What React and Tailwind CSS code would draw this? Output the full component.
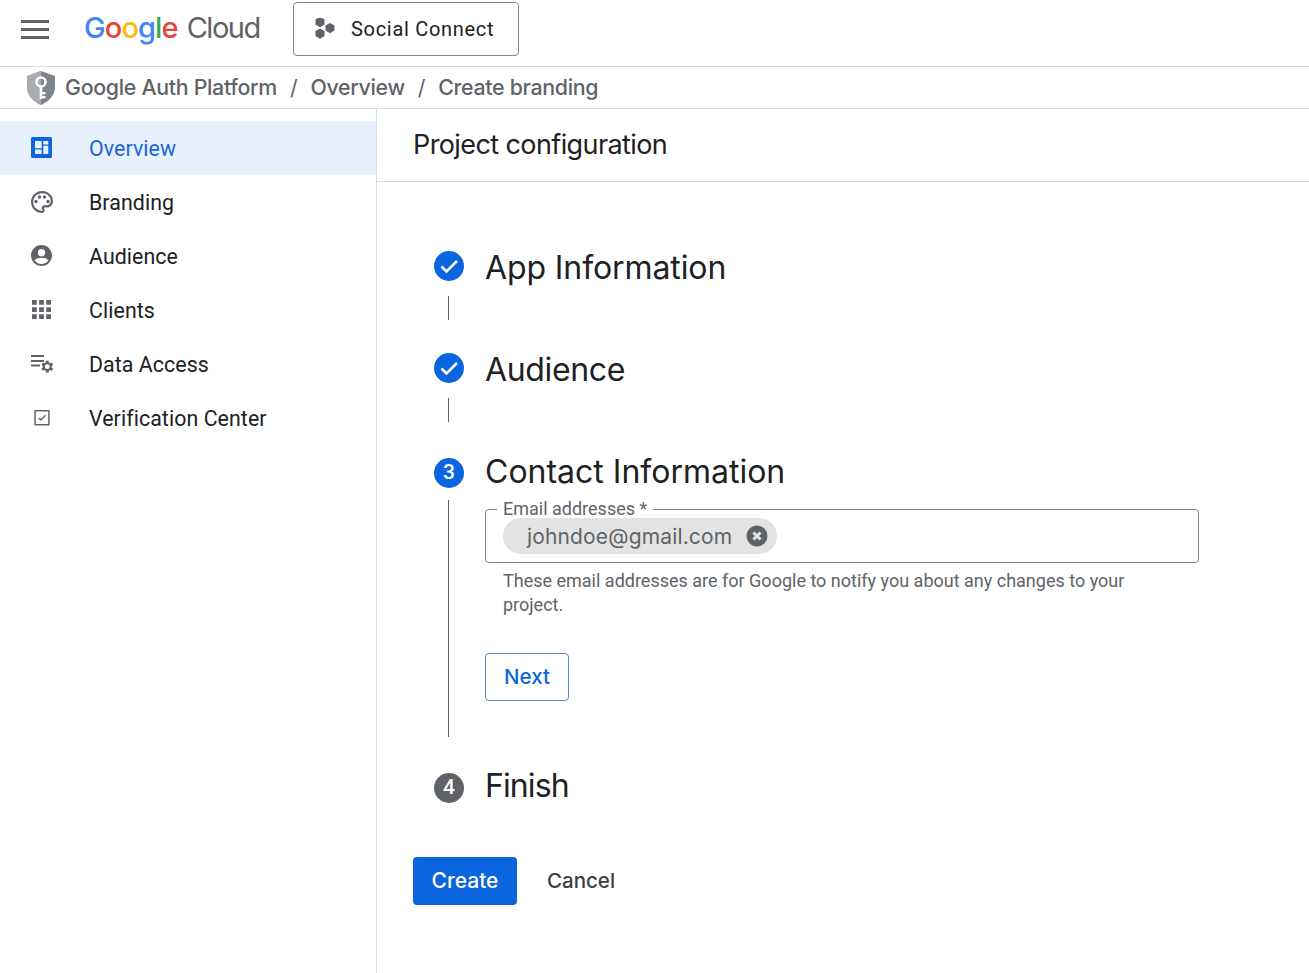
import React from "react";

const roboto = "font-['Roboto',sans-serif]";
const inter = "font-['Inter',sans-serif]";

const navItems = [
  ["Overview", "overview"],
  ["Branding", "palette"],
  ["Audience", "person"],
  ["Clients", "apps"],
  ["Data Access", "data"],
  ["Verification Center", "verify"],
];

function NavIcon({ name, color }) {
  const p = { width: 24, height: 24, viewBox: "0 0 24 24", fill: color };
  if (name === "overview")
    return (
      <svg {...p}>
        <path fillRule="evenodd" d="M2.500 1h18A1.500 1.500 0 0 1 22 2.500v18a1.500 1.500 0 0 1-1.500 1.500h-18A1.500 1.500 0 0 1 1 20.500v-18A1.500 1.500 0 0 1 2.500 1zM5 5v7.300h6.700V5H5zm8.300 0v3.500h5V5h-5zm0 4.700V18h5V9.700h-5zM5 13.500V18h6.700v-4.500H5z" />
      </svg>
    );
  if (name === "palette")
    return (
      <svg {...p}>
        <path d="M12 1C5.950 1 1 5.950 1 12s4.950 11 11 11c1.500 0 2.700-1.200 2.700-2.700 0-.67-.25-1.300-.7-1.800-.09-.11-.14-.23-.14-.36 0-.31.24-.55.55-.55H16.500c3.640 0 6.500-2.960 6.500-6.600C23 5.440 18.060 1 12 1zm4.500 14.300h-2.100c-1.500 0-2.750 1.250-2.750 2.750 0 .67.24 1.310.69 1.820.07.08.16.21.16.38 0 .31-.22.55-.5.55-4.850 0-8.800-3.950-8.800-8.800S7.150 3.200 12 3.200s8.800 3.450 8.800 7.700c0 2.430-1.870 4.400-4.300 4.400z" />
        <circle cx="6" cy="11.500" r="1.700" />
        <circle cx="9.500" cy="7" r="1.700" />
        <circle cx="14.500" cy="7" r="1.700" />
        <circle cx="18" cy="11.500" r="1.700" />
      </svg>
    );
  if (name === "person")
    return (
      <svg {...p}>
        <path transform="translate(-.5 -.5)" d="M12 1.500C6.200 1.500 1.500 6.200 1.500 12S6.200 22.500 12 22.500 22.500 17.800 22.500 12 17.800 1.500 12 1.500zm0 4a3.700 3.700 0 1 1 0 7.400 3.700 3.700 0 0 1 0-7.400zm0 15c-2.900 0-5.500-1.500-7-3.800 1.300-1.700 4.300-2.500 7-2.500s5.700.8 7 2.500a8.400 8.400 0 0 1-7 3.800z" />
      </svg>
    );
  if (name === "apps")
    return (
      <svg {...p}>
        <path transform="translate(2 2) scale(1.0556) translate(-3 -3)" d="M3 3h4.500v4.500H3zM9.750 3h4.500v4.500h-4.500zM16.500 3H21v4.500h-4.500zM3 9.750h4.500v4.500H3zM9.750 9.750h4.500v4.500h-4.500zM16.500 9.750H21v4.500h-4.500zM3 16.500h4.500V21H3zM9.750 16.500h4.500V21h-4.500zM16.500 16.500H21V21h-4.500z" />
      </svg>
    );
  if (name === "data")
    return (
      <svg {...p}>
        <path d="M1 3h13v2H1zM1 8h13v2H1zM1 12.500h9v2H1z" />
        <path transform="translate(8.460 6.540) scale(.68)" d="M19.400 13a7.500 7.500 0 0 0 0-2l2.100-1.600-2-3.400-2.500 1a7.500 7.500 0 0 0-1.700-1L15 3.300h-4l-.4 2.700a7.500 7.500 0 0 0-1.700 1l-2.500-1-2 3.400L6.500 11a7.500 7.500 0 0 0 0 2l-2.100 1.600 2 3.400 2.500-1a7.500 7.500 0 0 0 1.700 1l.4 2.700h4l.4-2.700a7.500 7.500 0 0 0 1.700-1l2.500 1 2-3.400zM13 15.500a3.500 3.500 0 1 1 0-7 3.500 3.500 0 0 1 0 7z" />
      </svg>
    );
  return (
    <svg {...p}>
      <path fillRule="evenodd" d="M5.300 4h13.400a1 1 0 0 1 1 1v13.400a1 1 0 0 1-1 1H5.300a1 1 0 0 1-1-1V5a1 1 0 0 1 1-1zM5.800 5.500v12.400h12.400V5.500H5.800z" />
      <path d="M10.800 15 8.200 12.400l1-1 1.600 1.600 4.300-4.300 1 1z" />
    </svg>
  );
}

function Check() {
  return (
    <div className="w-[30px] h-[30px] rounded-full bg-[#0b65de] flex items-center justify-center shrink-0">
      <svg width="24" height="24" viewBox="0 0 24 24" fill="none" stroke="#fff" strokeWidth="2.600">
        <path d="M4.500 12.500l5 5L20 7" />
      </svg>
    </div>
  );
}

function Num({ n, color, shift }) {
  return (
    <div className={`w-[30px] h-[30px] rounded-full ${color} ${shift} flex items-center justify-center shrink-0 text-white text-[21px] font-medium ${roboto}`}>
      {n}
    </div>
  );
}

function Heading({ children, extra }) {
  return <h2 className={`text-[32px] leading-[40px] text-[#202124] ${extra} ${inter}`}>{children}</h2>;
}

export default function App() {
  return (
    <div className={`w-[1309px] h-[973px] overflow-hidden bg-white flex flex-col ${roboto}`}>
      <header className="h-[67px] shrink-0 border-b border-[#dadce0] flex items-start">
        <button className="mt-[20px] ml-[21px] flex flex-col gap-[5px] w-[28px]">
          <span className="block h-[3px] bg-[#5f6368]" />
          <span className="block h-[3px] bg-[#5f6368]" />
          <span className="block h-[3px] bg-[#5f6368]" />
        </button>
        <div className={`ml-[35px] mt-[8px] text-[29px] leading-[40px] tracking-[-0.9px] whitespace-nowrap w-[174px] ${inter}`}>
          <span className="text-[#4285f4] font-medium">G</span>
          <span className="text-[#ea4335] font-medium">o</span>
          <span className="text-[#fbbc05] font-medium">o</span>
          <span className="text-[#4285f4] font-medium">g</span>
          <span className="text-[#34a853] font-medium">l</span>
          <span className="text-[#ea4335] font-medium">e</span>
          <span className="text-[#5f6368] ml-[9px] tracking-[-1.5px]">Cloud</span>
        </div>
        <button className="ml-[35px] mt-[2px] w-[226px] h-[54px] rounded-[4px] border border-[#80868b] flex items-center pl-[21px]">
          <svg width="22" height="22" viewBox="0 0 22 22" fill="#5f6368">
            <path d="M5 -1l4.500 2.600v5L5 9.200.5 6.600v-5zM5 10.500l4.500 2.600v5L5 20.700.5 18.100v-5zM15 5l4.500 2.600v5L15 15.200l-4.500-2.600v-5z" />
          </svg>
          <span className="ml-[14px] text-[20px] text-[#202124] tracking-[0.7px]">Social Connect</span>
        </button>
      </header>

      <div className={`h-[42px] shrink-0 border-b border-[#dadce0] flex items-center pl-[26px] text-[#5f6368] text-[21.33px] font-medium tracking-[-0.3px] ${inter}`}>
        <svg width="30" height="36" viewBox="0 0 30 36" className="mr-[9px]">
          <path d="M15 1 29 6v11c0 8-6 14.500-14 18C7 31.500 1 25 1 17V6z" fill="#80868b" />
          <path d="M15 1 1 6v11c0 8 6 14.500 14 18z" fill="#a8acb0" />
          <circle cx="15" cy="12" r="4.500" fill="none" stroke="#fff" strokeWidth="2.600" />
          <path d="M13.700 16h2.600v13h-2.600zM16 22h3.500v2.200H16zM16 26h3.500v2.200H16z" fill="#fff" />
        </svg>
        <span>Google Auth Platform</span>
        <span className="mx-[13px] font-normal">/</span>
        <span>Overview</span>
        <span className="mx-[13px] font-normal">/</span>
        <span>Create branding</span>
      </div>

      <div className="flex-1 flex min-h-0">
        <nav className="w-[377px] shrink-0 border-r border-[#dadce0] pt-[12px]">
          {navItems.map(([label, icon], i) => (
            <div key={label} className={`h-[54px] flex items-center pl-[30px] ${i === 0 ? "bg-[#e8f0fe]" : ""}`}>
              <NavIcon name={icon} color={i === 0 ? "#0b65de" : "#5f6368"} />
              <span className={`ml-[35px] pt-[1px] text-[21.33px] tracking-[0.08px] ${i === 0 ? "text-[#1a66d6]" : "text-[#202124]"}`}>{label}</span>
            </div>
          ))}
        </nav>

        <main className="flex-1 min-w-0">
          <div className="h-[73px] border-b border-[#dadce0] flex items-center pl-[36px]">
            <h1 className={`text-[27px] pt-[1px] text-[#202124] tracking-[-0.6px] ${inter}`}>Project configuration</h1>
          </div>

          <div className="pl-[57px] pt-[64px]">
            <div className="flex items-center h-[40px] gap-[21px]">
              <Check />
              <Heading extra="pt-[4px] tracking-[-0.1px]">App Information</Heading>
            </div>
            <div className="ml-[14px] mt-[10px] w-px h-[24px] bg-[#5f6368]" />
            <div className="flex items-center h-[40px] gap-[21px] mt-[28px]">
              <Check />
              <Heading extra="pt-[4px] tracking-[-0.35px]">Audience</Heading>
            </div>
            <div className="ml-[14px] mt-[10px] w-px h-[24px] bg-[#5f6368]" />
            <div className="flex items-center h-[40px] gap-[21px] mt-[28px]">
              <Num n="3" color="bg-[#0b65de]" shift="mt-[6px]" />
              <Heading extra="pt-[4px] tracking-[0px]">Contact Information</Heading>
            </div>

            <div className="flex mt-[10px]">
              <div className="ml-[14px] w-px h-[237px] bg-[#5f6368] shrink-0" />
              <div className="ml-[36px] w-[714px]">
                <div className="relative h-[54px] mt-[9px] rounded-[4px] border border-[#80868b] flex items-center pl-[17px]">
                  <span className="absolute -top-[12px] left-[11px] px-[6px] bg-white text-[18px] leading-[22px] text-[#5f6368]">Email addresses *</span>
                  <div className="relative h-[36px] rounded-full bg-[#e3e3e3] flex items-center pl-[24px] pr-[9px]">
                    <span className={`pt-[1px] text-[21px] text-[#5f6368] tracking-[0.15px] ${inter}`}>johndoe@gmail.com</span>
                    <svg width="22" height="22" viewBox="0 0 22 22" className="ml-[14px]">
                      <circle cx="11" cy="11" r="10.500" fill="#5f6368" />
                      <path d="M7.500 7.500l7 7M14.500 7.500l-7 7" stroke="#e3e3e3" strokeWidth="3" />
                    </svg>
                  </div>
                </div>
                <p className="mt-[6px] pl-[18px] text-[18px] leading-[24px] text-[#5f6368] w-[660px]">
                  These email addresses are for Google to notify you about any changes to your project.
                </p>
                <button className={`mt-[36px] w-[84px] h-[48px] rounded-[4px] border border-[#5b86c9] text-[#0b65de] text-[20.5px] font-medium ${inter}`}>
                  Next
                </button>
              </div>
            </div>

            <div className="flex items-center h-[40px] gap-[21px] mt-[29px]">
              <Num n="4" color="bg-[#5f6368]" shift="mt-[4px]" />
              <Heading extra="tracking-[-0.9px]">Finish</Heading>
            </div>
          </div>

          <div className={`pl-[36px] mt-[51px] flex items-center ${inter}`}>
            <button className="w-[104px] h-[48px] rounded-[4px] bg-[#0b65de] text-white text-[21px] font-medium">Create</button>
            <button className="ml-[30px] text-[20.5px] font-medium text-[#3c4043]">Cancel</button>
          </div>
        </main>
      </div>
    </div>
  );
}
